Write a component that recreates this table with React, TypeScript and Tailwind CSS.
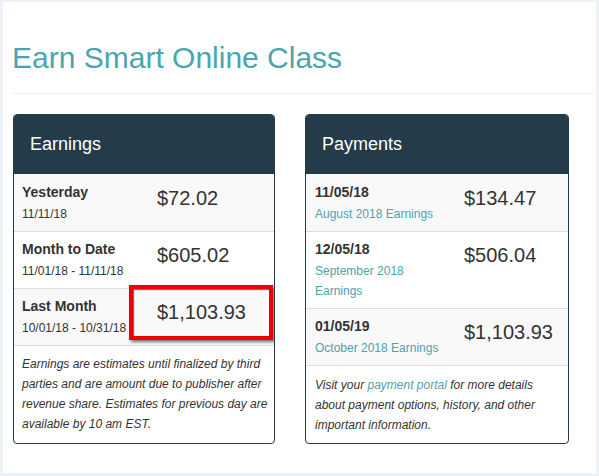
import type { ReactNode } from 'react';

type Row = { label: string; sub: ReactNode; value: string };

const earnings: Row[] = [
  { label: 'Yesterday', sub: '11/11/18', value: '$72.02' },
  { label: 'Month to Date', sub: '11/01/18 - 11/11/18', value: '$605.02' },
  { label: 'Last Month', sub: '10/01/18 - 10/31/18', value: '$1,103.93' },
];

const payments: Row[] = [
  { label: '11/05/18', sub: 'August 2018 Earnings', value: '$134.47' },
  { label: '12/05/18', sub: 'September 2018 Earnings', value: '$506.04' },
  { label: '01/05/19', sub: 'October 2018 Earnings', value: '$1,103.93' },
];

function Rows({ rows, cols, teal }: { rows: Row[]; cols: string; teal?: boolean }) {
  return (
    <>
      {rows.map((r, i) => (
        <div
          key={r.label}
          className={`grid ${cols} pb-[7px] ${i === 0 ? 'pt-2' : 'pt-[7px] border-t border-[#dddddd]'} ${
            i % 2 === 0 ? 'bg-[#f9f9f9]' : 'bg-white'
          }`}
        >
          <div>
            <div className="text-[14px] leading-5 font-bold text-[#333]">{r.label}</div>
            <div className={`mt-[2px] text-[12px] leading-5 ${teal ? 'text-[#4ba3ae]' : 'text-[#333]'}`}>{r.sub}</div>
          </div>
          <div className="mt-[2px] text-[20px] leading-7 text-[#333]">{r.value}</div>
        </div>
      ))}
    </>
  );
}

function Card({ title, children }: { title: string; children: ReactNode }) {
  return (
    <div className="relative flex flex-col overflow-hidden rounded-[4px] border border-[#233a48] bg-white">
      <div className="flex h-[59px] items-center bg-[#243b4a] pl-4 text-[18px] text-white">{title}</div>
      {children}
    </div>
  );
}

export default function App() {
  return (
    <div className="h-[476px] w-[599px] bg-[#edf2f9] pt-[2px] pl-[3px] pr-[3px] font-['Liberation_Sans',Arial,sans-serif]">
      <div className="h-[471px] bg-white pl-[9px] pt-[38px]">
        <h1 className="text-[30px] leading-9 text-[#48a6ae]">Earn Smart Online Class</h1>
        <div className="mt-[17px] border-t border-[#eeeeee]" />
        <div className="mt-5 grid grid-cols-[262px_264px] gap-x-[30px] pl-px">
          <Card title="Earnings">
            <div className="[&>div]:pl-2 flex flex-col">
              <Rows rows={earnings} cols="grid-cols-[123px_1fr] gap-x-[12px]" />
            </div>
            <div className="flex-1 border-t border-[#dddddd] pl-2 pt-2 pb-2 text-[12px] italic leading-5 text-[#333]">
              Earnings are estimates until finalized by third
              <br />
              parties and are amount due to publisher after
              <br />
              revenue share. Estimates for previous day are
              <br />
              available by 10 am EST.
            </div>
            {/* annotation box over "Last Month" value */}
            <div className="absolute left-[115px] top-[170px] h-[55px] w-[144px] border-4 border-[#ee0000] shadow-[2px_2px_3px_rgba(0,0,0,0.55),inset_1px_1px_1px_rgba(0,0,0,0.6)]" />
          </Card>
          <Card title="Payments">
            <div className="[&>div]:pl-[9px] flex flex-col">
              <Rows rows={payments} cols="grid-cols-[125px_1fr] gap-x-[24px]" teal />
            </div>
            <div className="flex-1 border-t border-[#dddddd] pl-[9px] pt-[9px] pb-2 text-[12px] italic leading-5 text-[#333]">
              Visit your <span className="text-[#4ba3ae]">payment portal</span> for more details
              <br />
              about payment options, history, and other
              <br />
              important information.
            </div>
          </Card>
        </div>
      </div>
    </div>
  );
}
